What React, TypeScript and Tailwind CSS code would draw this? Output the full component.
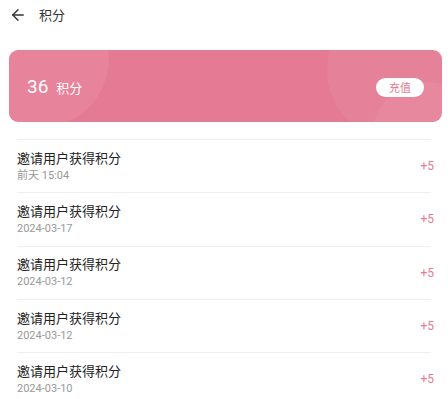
import { ArrowLeft } from "lucide-react";

const records = [
  { title: "邀请用户获得积分", time: "前天 15:04", points: "+5" },
  { title: "邀请用户获得积分", time: "2024-03-17", points: "+5" },
  { title: "邀请用户获得积分", time: "2024-03-12", points: "+5" },
  { title: "邀请用户获得积分", time: "2024-03-12", points: "+5" },
  { title: "邀请用户获得积分", time: "2024-03-10", points: "+5" },
];

export default function App() {
  return (
    <div
      className="w-[448px] h-[399px] overflow-hidden bg-white text-[#222]"
      style={{ fontFamily: '"Noto Sans CJK SC", "Noto Sans", sans-serif' }}
    >
      {/* Header */}
      <div className="h-[30px] flex items-center pl-[9px]">
        <ArrowLeft className="w-[18px] h-[18px] text-[#333]" strokeWidth={1.8} />
        <span className="ml-[12px] text-[13px] text-[#333]">积分</span>
      </div>

      {/* Points card */}
      <div className="ml-[9px] mr-[6px] mt-[20px] h-[72px] rounded-[9px] bg-[#e57a94] relative overflow-hidden flex items-center justify-between pl-[18px] pr-[18px]">
        <div className="absolute -left-[40px] -top-[62px] w-[140px] h-[140px] rounded-full bg-white/[0.07]" />
        <div className="absolute -right-[40px] -top-[50px] w-[155px] h-[140px] rounded-full bg-white/[0.06]" />
        <div className="absolute -right-[40px] top-[32px] w-[110px] h-[110px] rounded-full bg-white/[0.06]" />
        <div className="relative flex items-baseline text-white mt-[2px]">
          <span className="text-[19px]" style={{ fontFamily: "Roboto, sans-serif" }}>36</span>
          <span className="ml-[8px] text-[13px]">积分</span>
        </div>
        <button className="relative w-[48px] h-[19px] rounded-full bg-white text-[#e57a94] text-[11px] leading-none flex items-center justify-center mt-[2px]">
          充值
        </button>
      </div>

      {/* List */}
      <div className="mt-[17px] mx-[17px]">
        {records.map((r, i) => (
          <div key={i} className="h-[53.3px] border-t border-[#eeeeee] flex items-center justify-between">
            <div className="flex flex-col mt-[1px]">
              <span className="text-[13px] leading-[18px] text-[#222]">{r.title}</span>
              <span
                className="text-[11px] leading-[18px] text-[#999]"
                style={{ fontFamily: 'Roboto, "Noto Sans CJK SC", sans-serif' }}
              >
                {r.time}
              </span>
            </div>
            <span className="text-[12px] text-[#e57a94] -mr-[3px]" style={{ fontFamily: "Roboto, sans-serif" }}>
              {r.points}
            </span>
          </div>
        ))}
      </div>
    </div>
  );
}
